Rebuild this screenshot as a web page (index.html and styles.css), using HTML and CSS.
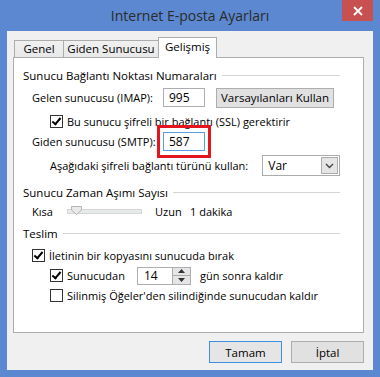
FILE: index.html
```html
<!DOCTYPE html>
<html lang="tr">
<head>
  <meta charset="UTF-8">
  <meta name="viewport" content="width=device-width, initial-scale=1.0">
  <title>Internet E-posta Ayarları</title>
  <link rel="stylesheet" href="styles.css">
</head>
<body>
  <div class="window">
    <div class="titlebar">
      <span class="title">Internet E-posta Ayarları</span>
      <button class="close-btn" aria-label="Kapat">
        <svg width="10" height="10" viewBox="0 0 10 10">
          <path d="M1 1 L9 9 M9 1 L1 9" stroke="#fff" stroke-width="1.8"/>
        </svg>
      </button>
    </div>

    <div class="client">
      <div class="tabs">
        <div class="tab tab-genel">Genel</div>
        <div class="tab tab-giden">Giden Sunucusu</div>
        <div class="tab tab-gelismis active">Gelişmiş</div>
      </div>

      <div class="panel">
        <div class="group-title r-head1"><span>Sunucu Bağlantı Noktası Numaraları</span></div>

        <div class="row r-imap lvl1">
          <span class="field-label">Gelen sunucusu (IMAP):</span>
          <div class="textbox port">995</div>
          <button class="btn btn-defaults">Varsayılanları Kullan</button>
        </div>

        <div class="row r-ssl lvl2">
          <span class="checkbox checked"></span>
          <span>Bu sunucu şifreli bir bağlantı (SSL) gerektirir</span>
        </div>

        <div class="row r-smtp lvl1">
          <span class="field-label">Giden sunucusu (SMTP):</span>
          <div class="mark-wrap">
            <div class="textbox port focused">587</div>
            <div class="red-mark"></div>
          </div>
        </div>

        <div class="row r-enc lvl2">
          <span class="enc-label">Aşağıdaki şifreli bağlantı türünü kullan:</span>
          <div class="combo">
            <span class="combo-text">Var</span>
            <span class="combo-arrow">
              <svg width="9" height="6" viewBox="0 0 9 6">
                <path d="M1 1 L4.5 4.5 L8 1" fill="none" stroke="#444" stroke-width="1.4"/>
              </svg>
            </span>
          </div>
        </div>

        <div class="group-title r-head2"><span>Sunucu Zaman Aşımı Sayısı</span></div>

        <div class="row r-timeout lvl1">
          <span class="kisa">Kısa</span>
          <div class="slider">
            <div class="track"></div>
            <svg class="thumb" width="11" height="9" viewBox="0 0 11 9">
              <path d="M0.5 0.5 H10.5 V4 L5.5 8.5 L0.5 4 Z" fill="#e9e9e9" stroke="#b5b5b5"/>
            </svg>
          </div>
          <span class="uzun">Uzun</span>
          <span>1 dakika</span>
        </div>

        <div class="group-title r-head3"><span>Teslim</span></div>

        <div class="row r-copy lvl1">
          <span class="checkbox checked"></span>
          <span>İletinin bir kopyasını sunucuda bırak</span>
        </div>

        <div class="row r-days lvl2">
          <span class="checkbox checked"></span>
          <span class="sunucudan">Sunucudan</span>
          <div class="spin">
            <span class="spin-text">14</span>
            <span class="spin-btns">
              <span class="spin-up">
                <svg width="7" height="4" viewBox="0 0 7 4"><path d="M0 4 L3.5 0 L7 4 Z" fill="#333"/></svg>
              </span>
              <span class="spin-down">
                <svg width="7" height="4" viewBox="0 0 7 4"><path d="M0 0 L3.5 4 L7 0 Z" fill="#333"/></svg>
              </span>
            </span>
          </div>
          <span>gün sonra kaldır</span>
        </div>

        <div class="row r-deleted lvl2">
          <span class="checkbox"></span>
          <span>Silinmiş Öğeler'den silindiğinde sunucudan kaldır</span>
        </div>
      </div>

      <div class="actions">
        <button class="btn btn-action default">Tamam</button>
        <button class="btn btn-action">İptal</button>
      </div>
    </div>
  </div>
</body>
</html>
```

FILE: styles.css
```css
body {
  margin: 0;
  font-family: "Open Sans", "Noto Sans", sans-serif;
  font-size: 11px;
  color: #000;
}
.window {
  width: 380px;
  height: 377px;
  background-color: #5b88d0;
  display: flex;
  flex-direction: column;
  box-sizing: border-box;
}
.titlebar {
  height: 31px;
  position: relative;
  display: flex;
  align-items: center;
  justify-content: center;
}
.title {
  font-size: 14px;
  color: #2b2b2b;
  margin-top: -1px;
}
.close-btn {
  position: absolute;
  top: 0;
  right: 7px;
  width: 31px;
  height: 21px;
  border: none;
  padding: 0;
  background-color: #c75050;
  display: flex;
  align-items: center;
  justify-content: center;
}
.client {
  margin: 0 7px;
  height: 339px;
  background-color: #f0f0f0;
  padding: 6px 9px 0 6px;
  box-sizing: border-box;
}

/* tabs */
.tabs {
  display: flex;
  align-items: flex-end;
  height: 20px;
  padding-left: 1px;
}
.tab {
  height: 17px;
  box-sizing: border-box;
  border: 1px solid #acacac;
  border-bottom: none;
  background: linear-gradient(#f0f0f0, #e8e8e8);
  text-align: center;
  line-height: 15px;
  font-size: 11.5px;
}
.tab + .tab {
  margin-left: -1px;
}
.tab-genel { width: 50px; }
.tab-giden { width: 96px; }
.tab-gelismis { width: 59px; }
.tab.active {
  height: 21px;
  margin-bottom: -1px;
  background: #fff;
  position: relative;
  z-index: 1;
  line-height: 17px;
}

/* panel */
.panel {
  height: 276px;
  border: 1px solid #adadad;
  background-color: #fff;
  box-sizing: border-box;
  padding: 9px 23px 0 9px;
}
.row {
  display: flex;
  align-items: center;
  height: 16px;
  white-space: nowrap;
}
.lvl1 { padding-left: 9px; }
.lvl2 { padding-left: 27px; }
.group-title {
  display: flex;
  align-items: center;
  height: 16px;
  font-size: 11.5px;
}
.group-title::after {
  content: "";
  flex: 1;
  height: 1px;
  background-color: #d5d5d5;
  margin-left: 5px;
}
.r-imap { margin-top: 4px; height: 21px; }
.r-ssl { margin-top: 5px; }
.r-smtp { margin-top: 2px; height: 21px; }
.r-enc { margin-top: 3px; height: 21px; }
.r-head2 { margin-top: 8px; }
.r-timeout { margin-top: 3px; }
.r-head3 { margin-top: 6px; }
.r-copy { margin-top: 6px; }
.r-days { margin-top: 3px; height: 19px; }
.r-deleted { margin-top: 2px; }

.field-label {
  width: 131px;
}
.textbox {
  height: 19px;
  box-sizing: border-box;
  border: 1px solid #abadb3;
  background: #fff;
  padding-left: 5px;
  line-height: 17px;
  font-size: 12px;
}
.port { width: 42px; }
.textbox.focused { border-color: #569de5; }
.mark-wrap {
  position: relative;
}
.red-mark {
  position: absolute;
  left: -6px;
  right: -6px;
  top: -7px;
  bottom: -7px;
  border: 3px solid #e3161d;
}

.btn {
  font-family: inherit;
  font-size: 11.5px;
  color: #000;
  border: 1px solid #adadad;
  background-color: #e1e1e1;
  padding: 0;
}
.btn-defaults {
  margin-left: 11px;
  width: 118px;
  height: 20px;
}

.checkbox {
  width: 13px;
  height: 13px;
  box-sizing: border-box;
  border: 1px solid #333;
  background: #fff;
  margin-right: 4px;
  position: relative;
  flex-shrink: 0;
}
.checkbox.checked::after {
  content: "";
  position: absolute;
  left: 3px;
  top: 0;
  width: 3px;
  height: 7px;
  border: solid #000;
  border-width: 0 2px 2px 0;
  transform: rotate(40deg);
}

.enc-label { width: 213px; }
.combo {
  width: 78px;
  height: 21px;
  box-sizing: border-box;
  border: 1px solid #acacac;
  background: #fff;
  display: flex;
  align-items: center;
  padding: 1px;
}
.combo-text {
  flex: 1;
  padding-left: 4px;
  font-size: 12px;
}
.combo-arrow {
  width: 17px;
  height: 17px;
  box-sizing: border-box;
  border: 1px solid #acacac;
  background: #e5e5e5;
  display: flex;
  align-items: center;
  justify-content: center;
}

.kisa { width: 35px; }
.slider {
  width: 88px;
  height: 16px;
  position: relative;
}
.track {
  width: 73px;
  height: 3px;
  margin-top: 6px;
  border: 1px solid #d6d6d6;
  background: #e7eaea;
}
.thumb {
  position: absolute;
  left: 4px;
  top: 3px;
}
.uzun { width: 35px; }

.sunucudan { width: 70px; }
.spin {
  width: 54px;
  height: 18px;
  box-sizing: border-box;
  border: 1px solid #abadb3;
  display: flex;
  margin-right: 9px;
}
.spin-text {
  flex: 1;
  padding-left: 6px;
  line-height: 16px;
  font-size: 12px;
}
.spin-btns {
  width: 17px;
  display: flex;
  flex-direction: column;
  border-left: 1px solid #acacac;
}
.spin-btns span {
  flex: 1;
  display: flex;
  align-items: center;
  justify-content: center;
  background: #e5e5e5;
}
.spin-up { border-bottom: 1px solid #acacac; }

/* bottom buttons */
.actions {
  display: flex;
  justify-content: flex-end;
  gap: 9px;
  margin-top: 8px;
}
.btn-action {
  width: 73px;
  height: 22px;
}
.btn-action.default {
  border-color: #3c8fe0;
  background-color: #e5e5e5;
}
```
